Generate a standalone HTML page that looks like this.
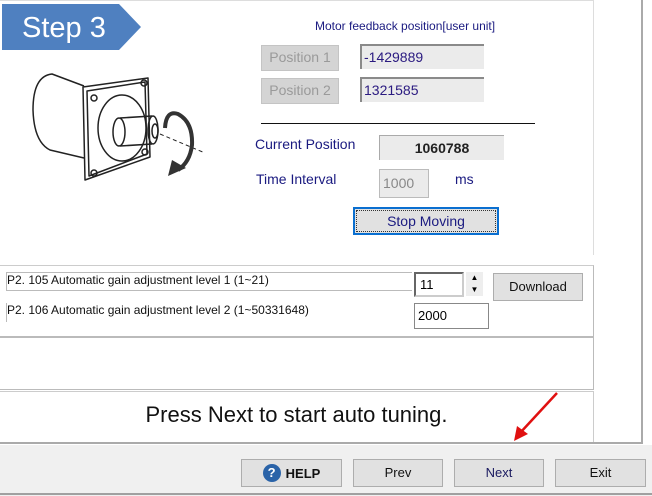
<!DOCTYPE html>
<html><head><style>
body{margin:0;width:652px;height:495px;background:#fff;position:relative;overflow:hidden;font-family:"Liberation Sans",sans-serif;}
.a{position:absolute;}
.pbtn{background:#d4d4d4;border:1px solid #c4c4c4;color:#9a9a9a;font-size:14px;line-height:22px;text-align:center;}
.fld{background:#ebebeb;border-top:2px solid #8a8a8a;border-left:2px solid #8a8a8a;color:#2a1a80;font-size:14px;line-height:22px;padding-left:2px;box-sizing:border-box;}
.lab{color:#1a1a80;font-size:14px;}
.btn{background:#e1e1e1;border:1px solid #adadad;font-size:13px;text-align:center;line-height:26px;box-sizing:border-box;color:#111;}
</style></head><body>
<div class="a" style="left:0;top:0;width:594px;height:255px;border-top:1px solid #ddd;border-right:1px solid #ddd;box-sizing:border-box"></div>
<svg class="a" style="left:0;top:0" width="220" height="200">
<polygon points="2,4 119,4 141,27 119,50 2,50" fill="#4f80c0"/>
<text x="22" y="37" fill="#fff" font-size="29" font-family="Liberation Sans">Step 3</text>
<g fill="none" stroke="#222" stroke-width="1.5" stroke-linejoin="round">
<path d="M84,86 L52,74 Q33,76 33,110 Q34,142 50,150 L84,158"/>
<path d="M83,87 L148,78 L150,157 L85,180 Z"/>
<path d="M87,91 L145,82 L147,154 L89,176 Z"/>
<ellipse cx="122" cy="128" rx="24" ry="33"/>
<path d="M120,118 L152,116 M120,146 L152,144"/>
<ellipse cx="119" cy="132" rx="6" ry="14"/>
<ellipse cx="153" cy="130" rx="5" ry="14"/>
<ellipse cx="155" cy="131" rx="3" ry="7"/>
<circle cx="94" cy="98" r="3"/><circle cx="144" cy="83" r="3"/><circle cx="94" cy="173" r="3"/><circle cx="145" cy="152" r="3"/>
<path d="M160,134 L205,153" stroke-dasharray="4,3" stroke-width="1"/>
<path d="M165,128 Q166,110 178,114 Q193,122 192,145 Q190,162 178,170" stroke="#333" stroke-width="4"/>
</g>
<polygon points="168,176 172,160 186,168" fill="#333"/>
</svg>
<div class="a lab" style="left:315px;top:19px;font-size:12px">Motor feedback position[user unit]</div>
<div class="a pbtn" style="left:261px;top:45px;width:76px;height:24px">Position 1</div>
<div class="a pbtn" style="left:261px;top:78px;width:76px;height:24px">Position 2</div>
<div class="a fld" style="left:360px;top:44px;width:124px;height:25px">-1429889</div>
<div class="a fld" style="left:360px;top:77px;width:124px;height:25px">1321585</div>
<div class="a" style="left:261px;top:123px;width:274px;height:1px;background:#111"></div>
<div class="a lab" style="left:255px;top:136px">Current Position</div>
<div class="a" style="left:379px;top:135px;width:125px;height:25px;background:#ebebeb;border-top:1px solid #aaa;border-left:1px solid #aaa;box-sizing:border-box;text-align:center;font-weight:bold;font-size:14px;line-height:24px;color:#222">1060788</div>
<div class="a lab" style="left:256px;top:171px">Time Interval</div>
<div class="a" style="left:379px;top:169px;width:50px;height:29px;background:#ebebeb;border:1px solid #bbb;box-sizing:border-box;font-size:14px;line-height:27px;padding-left:3px;color:#888">1000</div>
<div class="a lab" style="left:455px;top:171px">ms</div>
<div class="a" style="left:353px;top:207px;width:146px;height:28px;background:#e1e1e1;border:2px solid #0a6fd0;box-sizing:border-box;outline:1px dotted #333;outline-offset:-4px;text-align:center;line-height:24px;font-size:14px;color:#1a1a80">Stop Moving</div>

<div class="a" style="left:0;top:265px;width:594px;height:73px;border-top:1px solid #ccc;border-right:1px solid #bbb;border-bottom:2px solid #bbb;box-sizing:border-box"></div>
<div class="a" style="left:6px;top:272px;width:406px;height:19px;border:1px solid #bbb;border-right:none;box-sizing:border-box;font-size:12px;color:#111">P2. 105 Automatic gain adjustment level 1 (1~21)</div>
<div class="a" style="left:6px;top:303px;width:406px;height:19px;font-size:12px;color:#111;border-left:1px solid #bbb">P2. 106 Automatic gain adjustment level 2 (1~50331648)</div>
<div class="a" style="left:414px;top:272px;width:50px;height:25px;border:2px solid #666;border-right-color:#ccc;border-bottom-color:#ccc;box-sizing:border-box;font-size:13px;line-height:21px;padding-left:4px">11</div>
<div class="a" style="left:466px;top:272px;width:17px;height:24px;background:#eee;font-size:8px;text-align:center;line-height:12px">▲<br>▼</div>
<div class="a btn" style="left:493px;top:273px;width:90px;height:28px;background:#e1e1e1">Download</div>
<div class="a" style="left:414px;top:303px;width:75px;height:26px;border:1px solid #888;box-sizing:border-box;font-size:13px;line-height:24px;padding-left:3px">2000</div>
<div class="a" style="left:0;top:338px;width:594px;height:52px;border-right:1px solid #bbb;border-bottom:1px solid #bbb;box-sizing:border-box"></div>
<div class="a" style="left:0;top:391px;width:594px;height:52px;border-top:1px solid #ccc;border-right:1px solid #ccc;box-sizing:border-box;text-align:center;font-size:22px;line-height:46px;color:#111">Press Next to start auto tuning.</div>
<div class="a" style="left:641px;top:0;width:2px;height:444px;background:#aaa"></div>
<div class="a" style="left:0;top:442px;width:643px;height:2px;background:#aaa"></div>
<div class="a" style="left:0;top:444px;width:652px;height:51px;background:#f0f0f0;border-top:1px solid #fff"></div>
<div class="a" style="left:0;top:493px;width:652px;height:2px;background:#a0a0a0"></div>
<div class="a btn" style="left:241px;top:459px;width:101px;height:28px;font-weight:bold;display:flex;align-items:center;justify-content:center;line-height:normal"><span style="display:inline-block;width:18px;height:18px;border-radius:50%;background:#2a63a8;color:#fff;line-height:18px;text-align:center;margin-right:5px">?</span>HELP</div>
<div class="a btn" style="left:353px;top:459px;width:90px;height:28px">Prev</div>
<div class="a btn" style="left:454px;top:459px;width:90px;height:28px;color:#1a1a60">Next</div>
<div class="a btn" style="left:555px;top:459px;width:91px;height:28px">Exit</div>
<svg class="a" style="left:0;top:0" width="652" height="495"><line x1="557" y1="393" x2="520" y2="433" stroke="#e01010" stroke-width="2.5"/><polygon points="514,441 517,426 528,434" fill="#e01010"/></svg>
</body></html>
